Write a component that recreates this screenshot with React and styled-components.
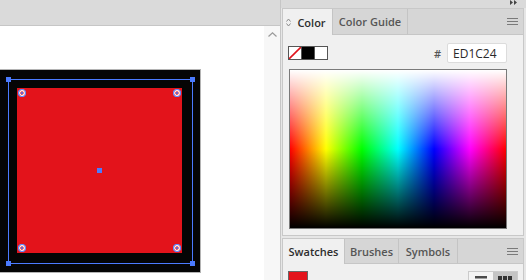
import React from 'react';
import styled, { createGlobalStyle } from 'styled-components';

const GlobalStyle = createGlobalStyle`
  html, body {
    margin: 0;
    padding: 0;
    width: 526px;
    height: 280px;
    overflow: hidden;
    background: #fff;
    font-family: "Open Sans", "Noto Sans", sans-serif;
  }
  * { box-sizing: border-box; }
`;

const Screen = styled.div`
  display: flex;
  width: 526px;
  height: 280px;
  overflow: hidden;
`;

// Left: document window
const Workspace = styled.div`
  width: 280px;
  display: flex;
  flex-direction: column;
`;

const DocTabs = styled.div`
  height: 26px;
  flex-shrink: 0;
  background: #dadada;
  border-bottom: 1px solid #c6c6c6;
`;

const DocArea = styled.div`
  flex: 1;
  display: flex;
  min-height: 0;
`;

const Canvas = styled.div`
  flex: 1;
  background: #fff;
  padding-top: 43px;
  overflow: hidden;
`;

const ScrollStrip = styled.div`
  width: 16px;
  background: #f7f7f7;
  display: flex;
  justify-content: center;
  align-items: flex-start;
  padding-top: 6px;
`;

const Artboard = styled.div`
  position: relative;
  width: 201px;
  height: 204px;
  background: #050505;
  border: 1px solid #b4b4b4;
  border-left: none;
  padding: 18px 0 0 17px;
`;

const RedSquare = styled.div`
  position: relative;
  width: 165px;
  height: 165px;
  background: #e3131b;
`;

const Selection = styled.div`
  position: absolute;
  left: 8px;
  top: 9px;
  width: 185px;
  height: 185px;
  border: 1px solid #4b7bff;
`;

const Handle = styled.span`
  position: absolute;
  width: 5px;
  height: 5px;
  background: #4b7bff;
  ${(p) => p.$x}: -3px;
  ${(p) => p.$y}: -3px;
`;

const CornerWidget = styled.svg`
  position: absolute;
  width: 8px;
  height: 8px;
  ${(p) => p.$x}: 1px;
  ${(p) => p.$y}: 1px;
`;

const CenterPoint = styled.span`
  position: absolute;
  left: 80px;
  top: 80px;
  width: 5px;
  height: 5px;
  background: #4b7bff;
`;

// Right: panel dock
const Panel = styled.div`
  width: 246px;
  display: flex;
  flex-direction: column;
  background: #e6e6e6;
  border-left: 1px solid #c6c6c6;
  padding: 0 2px 0 1px;
  overflow: hidden;
`;

const PanelTop = styled.div`
  height: 8px;
  flex-shrink: 0;
  margin: 0 -2px 0 -1px;
  background: #dadada;
  display: flex;
  justify-content: flex-end;
  padding-right: 9px;
`;

const Section = styled.section`
  display: flex;
  flex-direction: column;
  flex-shrink: ${(p) => (p.$last ? 1 : 0)};
  min-height: 0;
  background: #f0f0f0;
  border: 1px solid #c8c8c8;
  border-bottom: ${(p) => (p.$last ? 'none' : '1px solid #c8c8c8')};
  margin-bottom: ${(p) => (p.$last ? '0' : '2px')};
  overflow: hidden;
`;

const TabBar = styled.div`
  display: flex;
  flex-shrink: 0;
  height: ${(p) => p.$h}px;
  background: #d6d6d6;
`;

const Tab = styled.div`
  width: ${(p) => p.$w}px;
  display: flex;
  align-items: center;
  justify-content: center;
  gap: 6px;
  padding-right: ${(p) => (p.$icon ? 3 : 0)}px;
  font-size: 11px;
  font-weight: 600;
  color: ${(p) => (p.$active ? '#2d2d2d' : '#555')};
  background: ${(p) => (p.$active ? '#f0f0f0' : '#d6d6d6')};
  border-right: 1px solid #c4c4c4;
  border-bottom: ${(p) => (p.$active ? 'none' : '1px solid #c6c6c6')};
`;

const TabFiller = styled.div`
  flex: 1;
  display: flex;
  align-items: center;
  justify-content: flex-end;
  padding-right: 5px;
  border-bottom: 1px solid #c6c6c6;
`;

const ColorBody = styled.div`
  display: flex;
  flex-direction: column;
  padding: 8px 16px 6px 5px;
`;

const ColorRow = styled.div`
  height: 20px;
  display: flex;
  align-items: center;
  justify-content: space-between;
`;

const FillStroke = styled.div`
  display: flex;
  height: 14px;
  border: 1px solid #555;
  margin-top: -1px;
`;

const FillCell = styled.div`
  width: ${(p) => p.$w}px;
  height: 100%;
  background: ${(p) => p.$bg};
  border-left: ${(p) => (p.$sep ? '1px solid #555' : 'none')};
  display: flex;
`;

const HexGroup = styled.div`
  display: flex;
  align-items: center;
  gap: 6px;
`;

const HexLabel = styled.span`
  font-size: 11px;
  color: #555;
  font-weight: 600;
`;

const HexField = styled.div`
  width: 60px;
  height: 20px;
  background: #fff;
  border: 1px solid #dcdcdc;
  border-radius: 2px;
  padding-left: 5px;
  display: flex;
  align-items: center;
  font-size: 12px;
  color: #2a2a2a;
`;

const Spectrum = styled.div`
  height: 160px;
  margin: 6px 0 0 1px;
  border: 1px solid #7a7a7a;
  background:
    linear-gradient(to bottom, #fff 0%, rgba(255,255,255,0) 50%, rgba(0,0,0,0) 50%, #000 100%),
    linear-gradient(to right, #f00 0%, #ff0 16.7%, #0f0 33.3%, #0ff 50%, #00f 66.7%, #f0f 83.3%, #f00 100%);
`;

const SwatchBody = styled.div`
  display: flex;
  justify-content: space-between;
  align-items: flex-start;
  padding: 7px 5px 0 5px;
`;

const Swatch = styled.div`
  width: 20px;
  height: 20px;
  flex-shrink: 0;
  border: 1px solid #666;
  background: #e3131b;
`;

const ViewToggle = styled.div`
  display: flex;
  flex-shrink: 0;
  border: 1px solid #cbcbcb;
  height: 20px;
`;

const ViewButton = styled.div`
  width: 24px;
  display: flex;
  justify-content: center;
  padding-top: 4px;
  background: ${(p) => (p.$active ? '#c4c4c4' : '#f4f4f4')};
`;

const Hamburger = () => (
  <svg width="11" height="7" viewBox="0 0 11 7">
    <rect x="0" y="0" width="11" height="1" fill="#7a7a7a" />
    <rect x="0" y="3" width="11" height="1" fill="#7a7a7a" />
    <rect x="0" y="6" width="11" height="1" fill="#7a7a7a" />
  </svg>
);

export default function App() {
  const corners = [
    ['left', 'top'],
    ['right', 'top'],
    ['left', 'bottom'],
    ['right', 'bottom'],
  ];

  return (
    <>
      <GlobalStyle />
      <Screen>
        <Workspace>
          <DocTabs />
          <DocArea>
            <Canvas>
              <Artboard>
                <RedSquare>
                  {corners.map(([x, y]) => (
                    <CornerWidget key={x + y} $x={x} $y={y} viewBox="0 0 8 8">
                      <circle cx="4" cy="4" r="3.6" fill="none" stroke="#5f8cff" strokeWidth="1.3" />
                      <circle cx="4" cy="4" r="2.3" fill="none" stroke="#fff" strokeWidth="1.2" />
                      <circle cx="4" cy="4" r="1.1" fill="#4b7bff" />
                    </CornerWidget>
                  ))}
                  <CenterPoint />
                </RedSquare>
                <Selection>
                  {corners.map(([x, y]) => (
                    <Handle key={x + y} $x={x} $y={y} />
                  ))}
                </Selection>
              </Artboard>
            </Canvas>
            <ScrollStrip>
              <svg width="9" height="5" viewBox="0 0 9 5">
                <path d="M0.5 4.5 L4.5 0.8 L8.5 4.5" fill="none" stroke="#9a9a9a" strokeWidth="1.2" />
              </svg>
            </ScrollStrip>
          </DocArea>
        </Workspace>

        <Panel>
          <PanelTop>
            <svg width="7" height="5" viewBox="0 0 7 5">
              <path d="M0 0 L3 2.5 L0 5 Z M4 0 L7 2.5 L4 5 Z" fill="#444" />
            </svg>
          </PanelTop>

          {/* Color panel */}
          <Section>
            <TabBar $h={26}>
              <Tab $w={50} $active $icon>
                <svg width="5" height="9" viewBox="0 0 5 9">
                  <path d="M0.5 3.5 L2.5 1 L4.5 3.5 M0.5 5.5 L2.5 8 L4.5 5.5" fill="none" stroke="#8a8a8a" strokeWidth="1" />
                </svg>
                Color
              </Tab>
              <Tab $w={75}>Color Guide</Tab>
              <TabFiller>
                <Hamburger />
              </TabFiller>
            </TabBar>
            <ColorBody>
              <ColorRow>
                <FillStroke>
                  <FillCell $w={12} $bg="#fff">
                    <svg width="12" height="12" viewBox="0 0 12 12">
                      <line x1="0" y1="12" x2="12" y2="0" stroke="#e0141c" strokeWidth="1.6" />
                    </svg>
                  </FillCell>
                  <FillCell $w={13} $bg="#000" $sep />
                  <FillCell $w={13} $bg="#fff" $sep />
                </FillStroke>
                <HexGroup>
                  <HexLabel>#</HexLabel>
                  <HexField>ED1C24</HexField>
                </HexGroup>
              </ColorRow>
              <Spectrum />
            </ColorBody>
          </Section>

          {/* Swatches panel */}
          <Section $last>
            <TabBar $h={25}>
              <Tab $w={62} $active>Swatches</Tab>
              <Tab $w={54}>Brushes</Tab>
              <Tab $w={59}>Symbols</Tab>
              <TabFiller>
                <Hamburger />
              </TabFiller>
            </TabBar>
            <SwatchBody>
              <Swatch />
              <ViewToggle>
                <ViewButton>
                  <svg width="12" height="3" viewBox="0 0 12 3">
                    <rect width="12" height="2.5" fill="#4a4a4a" />
                  </svg>
                </ViewButton>
                <ViewButton $active>
                  <svg width="14" height="6" viewBox="0 0 14 6">
                    <rect x="0" width="4" height="6" fill="#333" />
                    <rect x="5" width="4" height="6" fill="#333" />
                    <rect x="10" width="4" height="6" fill="#333" />
                  </svg>
                </ViewButton>
              </ViewToggle>
            </SwatchBody>
          </Section>
        </Panel>
      </Screen>
    </>
  );
}
